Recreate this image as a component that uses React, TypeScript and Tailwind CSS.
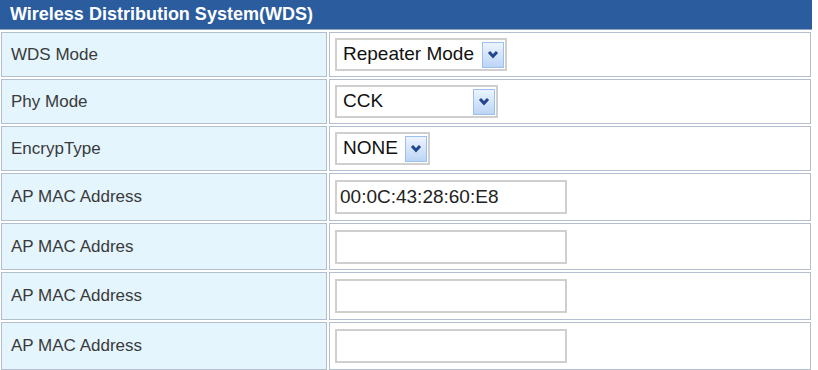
import React from "react";

const Chevron = () => (
  <span className="flex h-[26px] w-[22px] items-center justify-center border border-[#9cc0ee] bg-gradient-to-b from-[#edf4fe] to-[#bcd5f6]">
    <svg width="12" height="9" viewBox="0 0 12 9">
      <polyline points="2,2 6,6.2 10,2" fill="none" stroke="#22458f" strokeWidth="3" />
    </svg>
  </span>
);

const Select = ({ text, w }: { text: string; w: string }) => (
  <div className={`flex h-[33px] ${w} items-center justify-between border-2 border-[#cfcfcf] bg-white pl-[6px] pr-[1px]`}>
    <span className="text-[19px] text-[#111]">{text}</span>
    <Chevron />
  </div>
);

const Input = ({ value }: { value?: string }) => (
  <div className="flex h-[34px] w-[232px] items-center border-2 border-[#cfcfcf] bg-white pl-[3px]">
    <span className="text-[19px] text-[#222]">{value ?? ""}</span>
  </div>
);

const Row = ({ label, h, children }: { label: string; h: string; children: React.ReactNode }) => (
  <div className={`mt-[2px] flex ${h} gap-[2px] px-px`}>
    <div className="flex w-[326px] items-center border border-[#b3bfce] bg-[#e4f5fe] pl-[9px] text-[17px] text-[#3a3a3a]">
      {label}
    </div>
    <div className="flex flex-1 items-center border border-[#b3bfce] bg-white pl-[5px]">{children}</div>
  </div>
);

export default function App() {
  return (
    <div className="w-[812px] bg-white" style={{ fontFamily: '"Liberation Sans", Arial, sans-serif' }}>
      <div className="flex h-[30px] items-center border-b border-[#8ea3c0] bg-[#2b5c9e] pl-[10px] text-[18px] font-bold text-white">
        Wireless Distribution System(WDS)
      </div>
      <Row label="WDS Mode" h="h-[45px]">
        <Select text="Repeater Mode" w="w-[172px]" />
      </Row>
      <Row label="Phy Mode" h="h-[45px]">
        <Select text="CCK" w="w-[163px]" />
      </Row>
      <Row label="EncrypType" h="h-[45px]">
        <Select text="NONE" w="w-[95px]" />
      </Row>
      <Row label="AP MAC Address" h="h-[48px]">
        <Input value="00:0C:43:28:60:E8" />
      </Row>
      <Row label="AP MAC Addres" h="h-[47px]">
        <Input />
      </Row>
      <Row label="AP MAC Address" h="h-[48px]">
        <Input />
      </Row>
      <Row label="AP MAC Address" h="h-[48px]">
        <Input />
      </Row>
    </div>
  );
}
